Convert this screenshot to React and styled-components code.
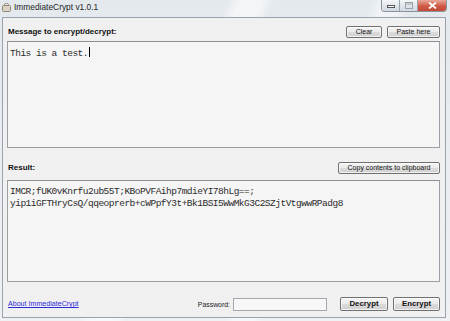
import React from "react";
import styled, { createGlobalStyle } from "styled-components";

const GlobalStyle = createGlobalStyle`
    html, body {
        margin: 0;
        padding: 0;
        background: #e9edf1;
    }
    body {
        font-family: "Liberation Sans", Arial, sans-serif;
    }
`;

const Window = styled.div`
    width: 450px;
    height: 321px;
    display: flex;
    flex-direction: column;
    box-sizing: border-box;
    background:
        linear-gradient(115deg, transparent 0 38%, rgba(255,255,255,0.55) 40% 44%, transparent 46% 62%, rgba(255,255,255,0.45) 64% 67%, transparent 69%),
        linear-gradient(180deg, #e4e9ee, #eef1f4);
    overflow: hidden;
`;

const TitleBar = styled.div`
    height: 17px;
    display: flex;
    align-items: flex-start;
    padding-left: 2px;
`;

const AppIcon = styled.svg`
    width: 9px;
    height: 9px;
    margin-top: 3px;
    margin-right: 3px;
`;

const Title = styled.span`
    font-family: "Liberation Sans", Arial, sans-serif;
    font-size: 8.4px;
    color: #1e1e1e;
    line-height: 15px;
`;

const Controls = styled.div`
    margin-left: auto;
    margin-right: 3px;
    display: flex;
    height: 11px;
    border: 1px solid #8a929c;
    border-top: 0;
    border-radius: 0 0 4px 4px;
    overflow: hidden;
`;

const CtlButton = styled.div`
    width: ${({ w }) => w}px;
    display: flex;
    align-items: center;
    justify-content: center;
    background: ${({ close }) => close
        ? "linear-gradient(180deg, #e9a99a, #cf5a45 55%, #c44a36)"
        : "linear-gradient(180deg, #f4f6f8, #dfe4ea 55%, #d2d9e1)"};
    border-left: ${({ first }) => first ? "0" : "1px solid #9aa2ab"};
`;

const Client = styled.div`
    flex: 1;
    margin: 0 4px 3px 2px;
    border: 1px solid #9aa3ad;
    background: #f0f0f0;
    padding: 8px 5px 6px 4px;
    display: flex;
    flex-direction: column;
`;

const Row = styled.div`
    display: flex;
    align-items: center;
    gap: 5px;
    margin-top: ${({ top }) => top ?? 0}px;
`;

const Label = styled.span`
    font-size: 8px;
    font-weight: bold;
    color: #111;
    margin-right: auto;
    padding-left: 1px;
    margin-bottom: 2px;
`;

const Button = styled.button`
    width: ${({ w }) => w}px;
    height: ${({ h }) => h ?? 12}px;
    padding: 0;
    border: 1px solid #707070;
    border-radius: 2px;
    background: linear-gradient(180deg, #f4f4f4 0%, #ebebeb 45%, #dcdcdc 50%, #cfcfcf 100%);
    font-family: "Liberation Sans", Arial, sans-serif;
    font-size: ${({ bold }) => bold ? 7.8 : 7}px;
    font-weight: ${({ bold }) => bold ? "bold" : "normal"};
    color: #111;
    line-height: 10px;
    box-shadow: inset 0 0 0 1px rgba(255,255,255,0.7);
`;

const TextBox = styled.div`
    height: ${({ h }) => h}px;
    margin-top: ${({ top }) => top}px;
    box-sizing: border-box;
    border: 1px solid #9a9fa6;
    border-top-color: #8c9097;
    background: #f5f5f5;
    padding: 5px 2px;
    font-family: "Liberation Mono", "Courier New", monospace;
    font-size: 9.5px;
    letter-spacing: -0.5px;
    line-height: 12px;
    color: #2c2c2c;
    white-space: pre;
`;

const Caret = styled.span`
    display: inline-block;
    width: 1px;
    height: 10px;
    background: #000;
    vertical-align: -1px;
    margin-left: 1px;
`;

const BottomRow = styled.div`
    display: flex;
    align-items: center;
    margin-top: auto;
`;

const AboutLink = styled.a`
    font-size: 7.1px;
    color: #2a2ad8;
    text-decoration: underline;
    padding-left: 1px;
    margin-right: auto;
`;

const PassLabel = styled.span`
    font-size: 6.9px;
    color: #222;
    margin-right: 3px;
`;

const PassInput = styled.div`
    width: 94px;
    height: 13px;
    box-sizing: border-box;
    border: 1px solid #a4a8ae;
    background: #f7f7f7;
    margin-right: 13px;
`;

const App = () => {
    return (
        <>
            <GlobalStyle />
            <Window>
                <TitleBar>
                    <AppIcon viewBox="0 0 9 9">
                        <rect x="0.5" y="2.5" width="8" height="6" rx="1" fill="#d9d3c3" stroke="#8f887a" />
                        <path d="M2.5 2.5 V1.5 a2 1.3 0 0 1 4 0 V2.5" fill="none" stroke="#8f887a" />
                    </AppIcon>
                    <Title>ImmediateCrypt v1.0.1</Title>
                    <Controls>
                        <CtlButton w={17} first>
                            <svg width="8" height="4" viewBox="0 0 8 4"><rect x="0.5" y="1.5" width="7" height="2" fill="#fff" stroke="#555" /></svg>
                        </CtlButton>
                        <CtlButton w={17}>
                            <svg width="8" height="7" viewBox="0 0 8 7"><rect x="0.5" y="0.5" width="7" height="6" fill="none" stroke="#9aa0a8" /><rect x="1.5" y="1.5" width="5" height="1" fill="#9aa0a8" /></svg>
                        </CtlButton>
                        <CtlButton w={28} close>
                            <svg width="9" height="7" viewBox="0 0 9 7"><path d="M1 0.5 L8 6.5 M8 0.5 L1 6.5" stroke="#fff" strokeWidth="1.8" /></svg>
                        </CtlButton>
                    </Controls>
                </TitleBar>
                <Client>
                    <Row>
                        <Label>Message to encrypt/decrypt:</Label>
                        <Button w={36}>Clear</Button>
                        <Button w={53}>Paste here</Button>
                    </Row>
                    <TextBox h={107} top={3}>This is a test.<Caret /></TextBox>
                    <Row top={14}>
                        <Label>Result:</Label>
                        <Button w={102}>Copy contents to clipboard</Button>
                    </Row>
                    <TextBox h={102} top={6}>
                        {"IMCR;fUK0vKnrfu2ub55T;KBoPVFAihp7mdieYI78hLg==;\nyip1iGFTHryCsQ/qqeoprerb+cWPpfY3t+Bk1BSI5WwMkG3C2SZjtVtgwwRPadg8"}
                    </TextBox>
                    <BottomRow>
                        <AboutLink href="#">About ImmediateCrypt</AboutLink>
                        <PassLabel>Password:</PassLabel>
                        <PassInput />
                        <Row>
                            <Button w={48} h={14} bold>Decrypt</Button>
                            <Button w={47} h={14} bold>Encrypt</Button>
                        </Row>
                    </BottomRow>
                </Client>
            </Window>
        </>
    );
};

export default App;
